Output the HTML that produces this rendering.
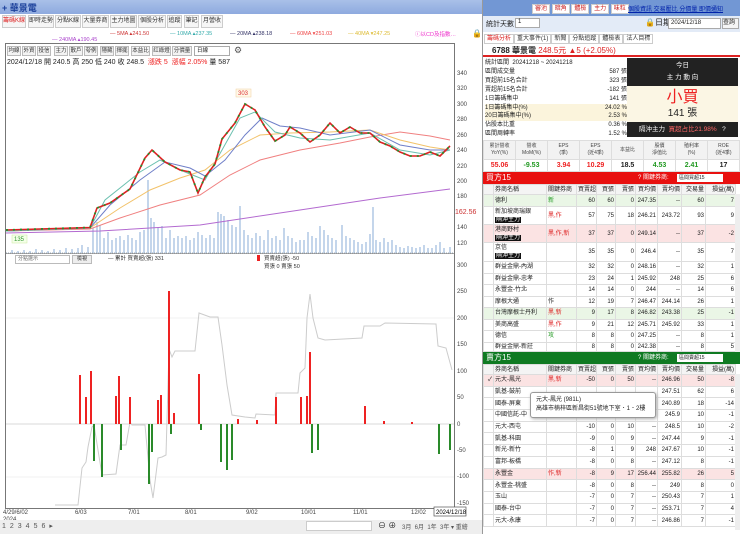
<!DOCTYPE html>
<html><head><meta charset="utf-8"><style>
*{margin:0;padding:0;box-sizing:border-box}
body{width:740px;height:534px;overflow:hidden;background:#fff;font-family:"Liberation Sans","Noto Sans CJK TC",sans-serif;font-size:7px;color:#222;position:relative}
.a{position:absolute}
.tab{position:absolute;top:15px;height:13px;border:1px solid #ccc;background:#f6f6f6;font-size:6px;line-height:11px;text-align:center;color:#333;overflow:hidden;white-space:nowrap}
.btn{position:absolute;top:46px;height:10px;border:1px solid #bbb;background:#f3f3f3;font-size:5.5px;line-height:8px;text-align:center;color:#333;overflow:hidden;white-space:nowrap}
table{border-collapse:collapse;table-layout:fixed;position:absolute;font-size:6px}
td{border:1px solid #ddd;padding:0 1px;white-space:nowrap;overflow:hidden;line-height:8px}
.r td{text-align:right}
.r td.l{text-align:left}
.bk{background:#111;color:#fff;padding:0 1px}
</style></head><body>

<div class="a" style="left:0;top:0;width:482px;height:14px;background:linear-gradient(#a9c0e8,#8eaadf)"></div>
<div class="a" style="left:2px;top:1px;font-size:9px;color:#1a3f9a;font-weight:bold">+ 華景電</div>
<div class="tab" style="left:2px;width:24px;color:#d22">籌碼K線</div>
<div class="tab" style="left:28px;width:26px">即時走勢</div>
<div class="tab" style="left:55px;width:26px">分點K線</div>
<div class="tab" style="left:82px;width:27px">大量券商</div>
<div class="tab" style="left:110px;width:27px">主力地圖</div>
<div class="tab" style="left:138px;width:28px">個股分析</div>
<div class="tab" style="left:167px;width:15px">追蹤</div>
<div class="tab" style="left:184px;width:15px">筆記</div>
<div class="tab" style="left:201px;width:22px">月營收</div>
<div class="a" style="left:110px;top:31px;font-size:5.5px;color:#c33">— 5MA ▴241.50</div>
<div class="a" style="left:170px;top:31px;font-size:5.5px;color:#3aa">— 10MA ▴237.35</div>
<div class="a" style="left:230px;top:31px;font-size:5.5px;color:#336">— 20MA ▴238.18</div>
<div class="a" style="left:290px;top:31px;font-size:5.5px;color:#e44">— 60MA ▾251.03</div>
<div class="a" style="left:348px;top:31px;font-size:5.5px;color:#db3">— 40MA ▾247.25</div>
<div class="a" style="left:415px;top:30px;font-size:5.5px;color:#e3c">ⓘ以CD及指數…</div>
<div class="a" style="left:472px;top:29px;font-size:8px">🔒</div>
<div class="a" style="left:52px;top:37px;font-size:5.5px;color:#a4c">— 240MA ▴190.45</div>

<div class="a" style="left:5px;top:43px;width:450px;height:466px;border:1px solid #777"></div>
<div class="btn" style="left:7px;width:14px">均線</div><div class="btn" style="left:22px;width:14px">外資</div><div class="btn" style="left:37px;width:14px">投信</div><div class="btn" style="left:54px;width:14px">主力</div><div class="btn" style="left:69px;width:14px">散戶</div><div class="btn" style="left:84px;width:14px">夸例</div><div class="btn" style="left:100px;width:14px">隱藏</div><div class="btn" style="left:115px;width:14px">揮擺</div><div class="btn" style="left:131px;width:19px">本益比</div><div class="btn" style="left:152px;width:19px">红綠燈</div><div class="btn" style="left:172px;width:20px">分價量</div>
<div class="a" style="left:194px;top:46px;width:36px;height:10px;border:1px solid #aaa;font-size:5.5px;line-height:8px;padding-left:2px">日線</div>
<div class="a" style="left:234px;top:45px;font-size:9px;color:#555">⚙</div>
<div class="a" style="left:7px;top:57px;font-size:7px">2024/12/18 開 240.5 高 250 低 240 收 248.5 <span style="color:#e22">&nbsp;漲跌 5 &nbsp;漲幅 2.05%</span> 量 587</div>

<svg class="a" style="left:0;top:0" width="482" height="534">
<g font-size="6" fill="#444">
<text x="457" y="75">340</text><text x="457" y="90">320</text><text x="457" y="106">300</text><text x="457" y="121">280</text><text x="457" y="137">260</text><text x="457" y="152">240</text><text x="457" y="168">220</text><text x="457" y="183">200</text><text x="457" y="198">180</text><text x="457" y="229">140</text><text x="457" y="245">120</text>
<text x="455" y="214" fill="#c33" font-size="7">162.56</text>
<text x="457" y="267">300</text><text x="457" y="293">250</text><text x="457" y="320">200</text><text x="457" y="346">150</text><text x="457" y="373">100</text><text x="457" y="399">50</text><text x="457" y="426">0</text><text x="457" y="452">-50</text><text x="457" y="478">-100</text><text x="457" y="505">-150</text>
<text x="3" y="514">4/29/6/02</text><text x="3" y="521">2024</text><text x="75" y="514">6/03</text><text x="128" y="514">7/01</text><text x="185" y="514">8/01</text><text x="246" y="514">9/02</text><text x="301" y="514">10/01</text><text x="353" y="514">11/01</text><text x="411" y="514">12/02</text>
</g>
<rect x="434" y="507" width="32" height="9" fill="#fff" stroke="#555" stroke-width=".7"/><text x="436" y="514" font-size="6">2024/12/18</text>
<path stroke="#b5cbe6" stroke-width="1.6" fill="none" d="M12 253V250M18 253V251M24 253V250M30 253V251M36 253V249M42 253V250M48 253V251M54 253V249M60 253V250M66 253V248M72 253V249M78 253V248M82 253V245M88 253V247M93 253V228M97 253V222M100 253V225M104 253V238M108 253V232M112 253V240M116 253V238M120 253V236M124 253V240M128 253V235M132 253V238M136 253V240M140 253V232M144 253V230M148 253V180M151 253V218M154 253V222M158 253V228M162 253V226M166 253V238M170 253V230M174 253V238M178 253V236M182 253V238M186 253V236M190 253V240M194 253V238M198 253V232M202 253V235M206 253V238M210 253V235M214 253V238M218 253V212M221 253V214M224 253V216M228 253V220M232 253V225M236 253V227M240 253V206M244 253V230M248 253V235M252 253V238M256 253V233M260 253V236M264 253V240M268 253V230M272 253V238M276 253V236M280 253V240M284 253V228M288 253V236M292 253V238M296 253V242M300 253V240M304 253V240M308 253V232M312 253V236M316 253V238M320 253V226M324 253V230M328 253V235M332 253V238M336 253V240M342 253V225M346 253V236M350 253V238M354 253V240M358 253V242M362 253V244M366 253V242M370 253V234M373 253V207M376 253V240M380 253V242M384 253V238M388 253V242M392 253V240M396 253V245M400 253V247M404 253V248M408 253V246M412 253V247M416 253V248M420 253V247M424 253V245M428 253V248M432 253V248M436 253V245M440 253V242M444 253V248M450 253V247"/>
<line x1="6" y1="253" x2="454" y2="253" stroke="#9ab" stroke-width="1" stroke-dasharray="1,1"/>
<path fill="none" stroke="#b36ad0" stroke-width="1" d="M6 233 L100 231 L200 225 L300 210 L380 198 L450 189"/>
<path fill="none" stroke="#f08080" stroke-width="1" d="M6 231 L90 229 L120 218 L160 205 L200 195 L230 175 L260 160 L300 150 L340 143 L370 137 L400 132 L430 136 L450 140"/>
<path fill="none" stroke="#f2c26a" stroke-width="1" d="M6 231 L90 228 L120 208 L150 190 L180 178 L205 170 L230 150 L260 135 L290 133 L330 132 L370 130 L400 140 L430 147 L450 150"/>
<path fill="none" stroke="#6f7fc8" stroke-width="1" d="M6 231 L90 228 L110 205 L140 180 L165 162 L190 168 L205 176 L225 160 L245 135 L262 118 L280 126 L300 128 L330 135 L370 130 L400 145 L430 150 L450 150"/>
<path fill="none" stroke="#6cc0b0" stroke-width="1" d="M6 231 L90 228 L105 200 L140 172 L160 160 L185 172 L205 180 L222 150 L240 118 L255 112 L275 132 L300 138 L330 140 L370 133 L400 150 L430 155 L450 150"/>
<path fill="none" stroke="#d22" stroke-width="1.6" d="M6 230 L90 227.5 L97 208 L110 203 L130 189 L145 158 L152 150 L165 162 L180 170 L190 172 L198 193 L205 177 L215 164 L222 139 L235 123 L245 104 L255 110 L265 127 L275 141 L285 135 L290 127 L300 133 L310 142 L320 135 L330 123 L340 133 L350 127 L360 133 L370 133 L380 142 L390 146 L400 152 L410 156 L420 156 L430 152 L440 156 L450 146"/>
<path fill="none" stroke="#2a8a2a" stroke-width="1.8" stroke-dasharray="2,5" d="M6 230 L90 227.5 L97 208 L110 203 L130 189 L145 158 L152 150 L165 162 L180 170 L190 172 L198 193 L205 177 L215 164 L222 139 L235 123 L245 104 L255 110 L265 127 L275 141 L285 135 L290 127 L300 133 L310 142 L320 135 L330 123 L340 133 L350 127 L360 133 L370 133 L380 142 L390 146 L400 152 L410 156 L420 156 L430 152 L440 156 L450 146"/>
<rect x="236" y="89" width="15" height="8" fill="#fff8e8" stroke="#f0d0a0" stroke-width=".5"/><text x="238" y="95" font-size="6" fill="#d33">303</text>
<rect x="12" y="235" width="15" height="8" fill="#f4ffe8" stroke="#cde8a0" stroke-width=".5"/><text x="14" y="241" font-size="6" fill="#393">135</text>
<line x1="6" y1="253.5" x2="454" y2="253.5" stroke="#555" stroke-width=".6"/>
<line x1="6" y1="424" x2="454" y2="424" stroke="#ccc" stroke-width=".7"/>
<line x1="6" y1="318" x2="454" y2="318" stroke="#eee" stroke-width=".7"/><line x1="6" y1="477" x2="454" y2="477" stroke="#eee" stroke-width=".7"/>
<path fill="none" stroke="#ccc" stroke-width="1" d="M55 505 L78 505 L82 468 L86 462 L88 447 L92 427 L94 425 L102 475 L116 474 L120 445 L126 445 L130 422 L132 425 L145 425 L150 480 L153 498 L158 458 L162 457 L166 455 L169 349 L172 357 L175 351 L195 351 L199 313 L210 317 L218 317 L222 345 L227 385 L232 415 L245 417 L255 418 L256 414 L275 415 L276 393 L298 393 L300 373 L305 368 L307 318 L310 294 L313 318 L318 338 L325 340 L362 338 L364 326 L380 326 L385 323 L436 324 L438 346 L446 348 L452 370"/>
<path stroke="#e22" stroke-width="2" d="M80 424V375M86 424V397M91 424V371M116 424V396M119 424V376M130 424V397M158 424V400M161 424V395M169 424V291M174 424V413M199 424V374M238 424V419M257 424V420M276 424V397M301 424V397M307 424V396M310 424V352M365 424V406M384 424V421M412 424V422"/>
<path stroke="#2a8a2a" stroke-width="2" d="M94 424V461M102 424V477M121 424V450M149 424V484M152 424V452M171 424V434M201 424V430M221 424V462M227 424V470M232 424V460M312 424V453M318 424V450M439 424V454M450 424V450"/>
<text x="108" y="260" font-size="5.5" fill="#333">— 累計 買賣超(張) 331</text>
<rect x="257" y="255" width="3" height="6" fill="#e22"/><text x="264" y="260" font-size="5.5" fill="#333">買賣超(張) -50</text>
<text x="264" y="268" font-size="5.5" fill="#333">買張 0 賣張 50</text>
</svg>
<div class="a" style="left:15px;top:255px;width:55px;height:9px;border:1px solid #bbb;font-size:5px;line-height:7px;padding-left:2px;color:#666">分點選示</div>
<div class="a" style="left:72px;top:255px;width:20px;height:9px;border:1px solid #bbb;background:#eee;font-size:5px;line-height:7px;text-align:center">檢視</div>
<div class="a" style="left:0;top:520px;width:482px;height:14px;background:#eee"></div>
<div class="a" style="left:2px;top:522px;font-size:7px;color:#555;letter-spacing:4px">123456▸</div>
<div class="a" style="left:306px;top:521px;width:66px;height:10px;border:1px solid #ccc;background:#fff"></div>
<div class="a" style="left:378px;top:520px;font-size:8px">⊖ ⊕</div>
<div class="a" style="left:402px;top:522px;font-size:6px;color:#555">3月 &nbsp;6月 &nbsp;1年 &nbsp;3年 ▾ 重繪</div>

<div class="a" style="left:482px;top:0;width:1px;height:534px;background:#999"></div>
<div class="a" style="left:483px;top:0;width:257px;height:16px;background:#7297d4"></div>
<div class="a" style="left:532px;top:3px;font-size:6px;color:#c22">
<span style="background:#fff;padding:1px 2px;border:1px solid #ccc">審池</span> <span style="background:#fff;padding:1px 2px;border:1px solid #ccc">暗角</span> <span style="background:#fff;padding:1px 2px;border:1px solid #ccc">體檢</span> <span style="background:#fff;padding:1px 2px;border:1px solid #ccc">主力</span> <span style="background:#fff;padding:1px 2px;border:1px solid #ccc">味粒</span></div>
<div class="a" style="left:628px;top:4px;font-size:6px;color:#02a;text-decoration:underline">個股資訊 交易壓比 分價量 即價通知</div>
<div class="a" style="left:483px;top:16px;width:257px;height:16px;background:#e3ebf7"></div>
<div class="a" style="left:486px;top:19px;font-size:7px">統計天數</div>
<div class="a" style="left:515px;top:18px;width:25px;height:10px;border:1px solid #aaa;background:#fff;font-size:6px;padding-left:2px">1</div>
<div class="a" style="left:645px;top:17px;font-size:8px">🔒日期</div>
<div class="a" style="left:668px;top:18px;width:53px;height:11px;border:1px solid #aaa;background:#fff;font-size:6px;padding-left:2px;line-height:9px">2024/12/18</div>
<div class="a" style="left:722px;top:18px;width:17px;height:11px;border:1px solid #aaa;background:#f5f5f5;font-size:6px;line-height:9px">查詢</div>
<div class="a" style="left:484px;top:33px;font-size:6px;color:#333">
<span style="border:1px solid #ccc;padding:1px 2px;color:#d22">籌碼分析</span><span style="border:1px solid #ccc;padding:1px 2px">重大事件(1)</span><span style="border:1px solid #ccc;padding:1px 2px">新聞</span><span style="border:1px solid #ccc;padding:1px 2px">分點追蹤</span><span style="border:1px solid #ccc;padding:1px 2px">體檢表</span><span style="border:1px solid #ccc;padding:1px 2px">法人目標</span></div>
<div class="a" style="left:483px;top:43px;width:257px;height:14px;border-bottom:2px solid #d22"></div>
<div class="a" style="left:492px;top:45px;font-size:8px;font-weight:bold">6788 華景電 <span style="color:#d22;font-weight:normal">248.5元 ▲5 (+2.05%)</span></div>
<div class="a" style="left:485px;top:59px;width:142px;font-size:6px;line-height:8.9px">
<div>統計區間 &nbsp;20241218 ~ 20241218</div>
<div>區間成交量<span style="float:right">587 張</span></div>
<div>買超前15名合計<span style="float:right">323 張</span></div>
<div>賣超前15名合計<span style="float:right">-182 張</span></div>
<div>1日籌碼集中<span style="float:right">141 張</span></div>
<div style="background:#fbf4dc">1日籌碼集中(%)<span style="float:right">24.02 %</span></div>
<div style="background:#fbf4dc">20日籌碼集中(%)<span style="float:right">2.53 %</span></div>
<div>佔股本比重<span style="float:right">0.36 %</span></div>
<div>區間周轉率<span style="float:right">1.52 %</span></div>
</div>
<div class="a" style="left:627px;top:58px;width:111px;height:28px;background:#222;color:#fff;text-align:center;font-size:6.5px;line-height:12px;padding-top:2px">今日<br>主 力 動 向</div>
<div class="a" style="left:627px;top:86px;width:111px;height:36px;background:#fbf6e4;text-align:center"><div style="color:#e22;font-size:16px;line-height:20px;margin-top:2px">小買</div><div style="font-size:10px;line-height:12px">141 張</div></div>
<div class="a" style="left:627px;top:122px;width:111px;height:15px;background:#222;color:#fff;font-size:6.5px;line-height:15px;padding-left:12px">隔沖主力 &nbsp;<span style="color:#f66">買超占比21.98%</span> &nbsp; ?</div>
<table style="left:483px;top:140px;width:257px;text-align:center;font-size:5px">
<tr style="background:#f2f2f2;height:19px;color:#444"><td style="line-height:7px">累計營收<br>YoY(%)</td><td style="line-height:7px">營收<br>MoM(%)</td><td style="line-height:7px">EPS<br>(季)</td><td style="line-height:7px">EPS<br>(近4季)</td><td>本益比</td><td style="line-height:7px">股價<br>淨值比</td><td style="line-height:7px">殖利率<br>(%)</td><td style="line-height:7px">ROE<br>(近4季)</td></tr>
<tr style="height:12px;font-size:7px;font-weight:bold"><td style="color:#e22">55.06</td><td style="color:#292">-9.53</td><td style="color:#e22">3.94</td><td style="color:#e22">10.29</td><td>18.5</td><td style="color:#292">4.53</td><td style="color:#292">2.41</td><td>17</td></tr></table>

<div class="a" style="left:483px;top:172px;width:257px;height:12px;background:#e8100f;color:#fff;font-size:8px;padding-left:3px;line-height:12px">買方15<span style="position:absolute;left:155px;font-size:6px">? 關鍵券商:</span></div>
<div class="a" style="left:677px;top:174px;width:46px;height:8px;background:#fff;font-size:5px;line-height:8px;padding-left:2px">區間買超15</div>
<table class="r" style="left:483px;top:184px;width:252px">
<colgroup><col style="width:10px"><col style="width:53px"><col style="width:30px"><col style="width:20px"><col style="width:19px"><col style="width:20px"><col style="width:22px"><col style="width:24px"><col style="width:24px"><col style="width:30px"></colgroup>
<tr style="height:10px;background:#f4f4f4"><td></td><td class="l">券商名稱</td><td class="l">關鍵券商</td><td>買賣超</td><td>買張</td><td>賣張</td><td>買均價</td><td>賣均價</td><td>交易量</td><td>損益(萬)</td></tr>
<tr style="height:12px;background:#eaf6e6"><td></td><td class="l">德利</td><td class="l" style="color:#292">新</td><td>60</td><td>60</td><td>0</td><td>247.35</td><td>--</td><td>60</td><td>7</td></tr>
<tr style="height:18px"><td></td><td class="l">新加坡商瑞銀<br><span class="bk">隔沖主力</span></td><td class="l" style="color:#d22">黑,作</td><td>57</td><td>75</td><td>18</td><td>246.21</td><td>243.72</td><td>93</td><td>9</td></tr>
<tr style="height:18px;background:#fbe3e3"><td></td><td class="l">港商野村<br><span class="bk">隔沖主力</span></td><td class="l" style="color:#d22">黑,作,新</td><td>37</td><td>37</td><td>0</td><td>249.14</td><td>--</td><td>37</td><td>-2</td></tr>
<tr style="height:19px"><td></td><td class="l">京信<br><span class="bk">隔沖主力</span></td><td></td><td>35</td><td>35</td><td>0</td><td>246.4</td><td>--</td><td>35</td><td>7</td></tr>
<tr style="height:11.5px"><td></td><td class="l">群益金鼎-內湖</td><td></td><td>32</td><td>32</td><td>0</td><td>248.16</td><td>--</td><td>32</td><td>1</td></tr>
<tr style="height:11.5px"><td></td><td class="l">群益金鼎-忠孝</td><td></td><td>23</td><td>24</td><td>1</td><td>245.92</td><td>248</td><td>25</td><td>6</td></tr>
<tr style="height:11.5px"><td></td><td class="l">永豐金-竹北</td><td></td><td>14</td><td>14</td><td>0</td><td>244</td><td>--</td><td>14</td><td>6</td></tr>
<tr style="height:11.5px"><td></td><td class="l">摩根大通</td><td class="l">作</td><td>12</td><td>19</td><td>7</td><td>246.47</td><td>244.14</td><td>26</td><td>1</td></tr>
<tr style="height:11.5px;background:#eaf6e6"><td></td><td class="l">台灣摩根士丹利</td><td class="l" style="color:#d22">黑,新</td><td>9</td><td>17</td><td>8</td><td>246.82</td><td>243.38</td><td>25</td><td>-1</td></tr>
<tr style="height:11.5px"><td></td><td class="l">美商高盛</td><td class="l" style="color:#d22">黑,作</td><td>9</td><td>21</td><td>12</td><td>245.71</td><td>245.92</td><td>33</td><td>1</td></tr>
<tr style="height:11.5px"><td></td><td class="l">德信</td><td class="l" style="color:#292">攻</td><td>8</td><td>8</td><td>0</td><td>247.25</td><td>--</td><td>8</td><td>1</td></tr>
<tr style="height:9px"><td></td><td class="l">群益金鼎-新莊</td><td></td><td>8</td><td>8</td><td>0</td><td>242.38</td><td>--</td><td>8</td><td>5</td></tr>
</table>
<div class="a" style="left:735px;top:194px;width:5px;height:158px;background:#eee"></div>

<div class="a" style="left:483px;top:352px;width:257px;height:12px;background:#0f7a22;color:#fff;font-size:8px;padding-left:3px;line-height:12px">賣方15<span style="position:absolute;left:155px;font-size:6px">? 關鍵券商:</span></div>
<div class="a" style="left:677px;top:354px;width:46px;height:8px;background:#fff;font-size:5px;line-height:8px;padding-left:2px">區間賣超15</div>
<table class="r" style="left:483px;top:364px;width:252px">
<colgroup><col style="width:10px"><col style="width:53px"><col style="width:30px"><col style="width:20px"><col style="width:19px"><col style="width:20px"><col style="width:22px"><col style="width:24px"><col style="width:24px"><col style="width:30px"></colgroup>
<tr style="height:10px;background:#f4f4f4"><td></td><td class="l">券商名稱</td><td class="l">關鍵券商</td><td>買賣超</td><td>買張</td><td>賣張</td><td>買均價</td><td>賣均價</td><td>交易量</td><td>損益(萬)</td></tr>
<tr style="height:11.7px;background:#fbe3e3"><td>✓</td><td class="l">元大-鳳光</td><td class="l" style="color:#d22">黑,新</td><td>-50</td><td>0</td><td>50</td><td>--</td><td>246.96</td><td>50</td><td>-8</td></tr>
<tr style="height:11.7px"><td></td><td class="l">凱基-鼓前</td><td></td><td></td><td></td><td></td><td></td><td>247.51</td><td>62</td><td>6</td></tr>
<tr style="height:11.7px"><td></td><td class="l">國泰-屏東</td><td></td><td></td><td></td><td></td><td></td><td>240.89</td><td>18</td><td>-14</td></tr>
<tr style="height:11.7px"><td></td><td class="l">中國信託-中</td><td></td><td></td><td></td><td></td><td></td><td>245.9</td><td>10</td><td>-1</td></tr>
<tr style="height:11.7px"><td></td><td class="l">元大-西屯</td><td></td><td>-10</td><td>0</td><td>10</td><td>--</td><td>248.5</td><td>10</td><td>-2</td></tr>
<tr style="height:11.7px"><td></td><td class="l">凱基-科園</td><td></td><td>-9</td><td>0</td><td>9</td><td>--</td><td>247.44</td><td>9</td><td>-1</td></tr>
<tr style="height:11.7px"><td></td><td class="l">新光-新竹</td><td></td><td>-8</td><td>1</td><td>9</td><td>248</td><td>247.67</td><td>10</td><td>-1</td></tr>
<tr style="height:11.7px"><td></td><td class="l">富邦-板橋</td><td></td><td>-8</td><td>0</td><td>8</td><td>--</td><td>247.12</td><td>8</td><td>-1</td></tr>
<tr style="height:11.7px;background:#fbe3e3"><td></td><td class="l">永豐金</td><td class="l" style="color:#d22">作,新</td><td>-8</td><td>9</td><td>17</td><td>256.44</td><td>255.82</td><td>26</td><td>5</td></tr>
<tr style="height:11.7px"><td></td><td class="l">永豐金-桃盛</td><td></td><td>-8</td><td>0</td><td>8</td><td>--</td><td>249</td><td>8</td><td>0</td></tr>
<tr style="height:11.7px"><td></td><td class="l">玉山</td><td></td><td>-7</td><td>0</td><td>7</td><td>--</td><td>250.43</td><td>7</td><td>1</td></tr>
<tr style="height:11.7px"><td></td><td class="l">國泰-台中</td><td></td><td>-7</td><td>0</td><td>7</td><td>--</td><td>253.71</td><td>7</td><td>4</td></tr>
<tr style="height:11.7px"><td></td><td class="l">元大-永康</td><td></td><td>-7</td><td>0</td><td>7</td><td>--</td><td>246.86</td><td>7</td><td>-1</td></tr>
</table>
<div class="a" style="left:735px;top:374px;width:5px;height:156px;background:#eee"></div>
<div class="a" style="left:530px;top:392px;width:126px;height:26px;background:#fff;border:1px solid #999;border-radius:3px;box-shadow:1px 1px 3px #aaa;font-size:6px;line-height:9px;padding:3px 5px;white-space:nowrap;overflow:hidden">元大-鳳光 (981L)<br>高雄市楠梓區新昌街51號地下室．1．2樓</div>
</body></html>
